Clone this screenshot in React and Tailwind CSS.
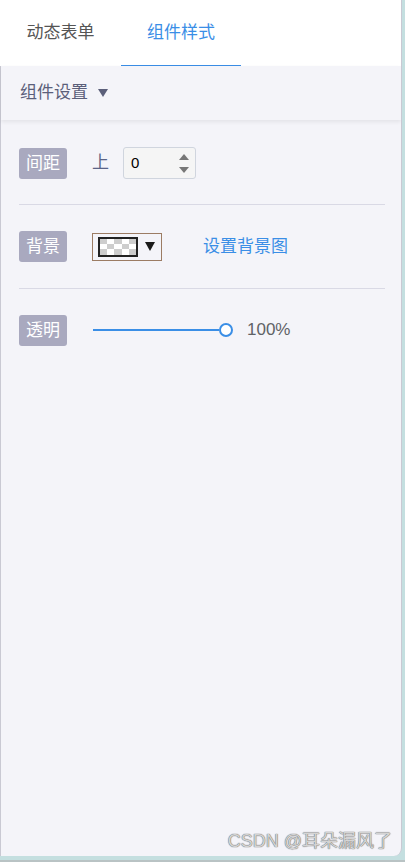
import React from 'react'

const font = { fontFamily: '"Liberation Sans", "Noto Sans CJK SC", sans-serif' }

function Badge({ children }) {
  return (
    <div className="flex h-[31px] w-[48px] items-center justify-center rounded-[3px] bg-[#a9a9bf] text-[17px] leading-none text-white">
      {children}
    </div>
  )
}

function Checker() {
  const cells = []
  for (let r = 0; r < 3; r++) {
    for (let c = 0; c < 5; c++) {
      cells.push(
        <div key={r + '-' + c} className={(r + c) % 2 === 0 ? 'bg-[#cdcdcd]' : 'bg-white'} />
      )
    }
  }
  return (
    <div className="grid h-[20px] w-[40px] grid-cols-5 grid-rows-3 overflow-hidden border-2 border-[#222]">
      {cells}
    </div>
  )
}

export default function App() {
  return (
    <div className="relative flex h-[862px] w-[405px] flex-col bg-[#c4dfe0]" style={font}>
      <div className="flex h-[856px] w-[402px] flex-col overflow-hidden rounded-br-[8px] border-r border-[#c9c9d3] bg-[#f4f4f9]">
        <div className="flex h-[66px] shrink-0 bg-white">
          <div className="flex w-[121px] items-center justify-center text-[17px] text-[#555]">动态表单</div>
          <div className="flex w-[120px] items-center justify-center border-b border-[#3a8ee6] text-[17px] text-[#3a8ee6]">
            组件样式
          </div>
        </div>
        <div className="flex flex-1 flex-col border-l border-[#c9c9d3]">
          <div className="flex h-[54px] shrink-0 items-center gap-[10px] pl-[19px] text-[17px] text-[#5b5f7a] shadow-[0_2px_4px_rgba(0,0,0,0.07)]">
            <span>组件设置</span>
            <svg width="10" height="8" viewBox="0 0 10 8">
              <path d="M0 0 L10 0 L5 8 Z" fill="#5b5f7a" />
            </svg>
          </div>
          <div className="flex flex-col pl-[18px] pr-[16px] pt-[27px]">
            <div className="flex h-[32px] items-center">
              <Badge>间距</Badge>
              <span className="ml-[25px] text-[17px] text-[#5b6488]">上</span>
              <div className="ml-[14px] flex h-[32px] w-[73px] items-center justify-between rounded-[3px] border border-[#d0d5de] bg-[#f5f5f5] pl-[7px] pr-[6px]">
                <span className="text-[15px] text-black">0</span>
                <div className="flex flex-col gap-[7px]">
                  <svg width="10" height="6" viewBox="0 0 10 6"><path d="M0 6 L5 0 L10 6 Z" fill="#777" /></svg>
                  <svg width="10" height="6" viewBox="0 0 10 6"><path d="M0 0 L10 0 L5 6 Z" fill="#777" /></svg>
                </div>
              </div>
            </div>
            <div className="mt-[25px] h-px bg-[#d9d9e5]" />
            <div className="mt-[25px] flex h-[33px] items-center">
              <Badge>背景</Badge>
              <div className="ml-[25px] flex h-[28px] w-[70px] items-center gap-[7px] border border-[#9c7c64] pl-[5px]">
                <Checker />
                <svg width="10" height="9" viewBox="0 0 10 9"><path d="M0 0 L10 0 L5 9 Z" fill="#1a1a1a" /></svg>
              </div>
              <span className="ml-[41px] text-[17px] text-[#3a8ee6]">设置背景图</span>
            </div>
            <div className="mt-[25px] h-px bg-[#d9d9e5]" />
            <div className="mt-[25px] flex h-[32px] items-center">
              <Badge>透明</Badge>
              <div className="ml-[26px] flex w-[140px] items-center">
                <div className="h-[2px] flex-1 bg-[#3a8ee6]" />
                <div className="h-[14px] w-[14px] rounded-full border-2 border-[#3a8ee6] bg-white" />
              </div>
              <span className="ml-[14px] text-[17px] text-[#606266]">100%</span>
            </div>
          </div>
        </div>
      </div>
      <div className="absolute bottom-[7px] right-[13px] text-[18px] text-[#d4d4d4] [text-shadow:0_0_1px_#6a6a6a,0_0_1px_#6a6a6a]">
        CSDN @耳朵漏风了
      </div>
      <div className="mt-auto h-[2px] bg-[#b9c3c4]" />
    </div>
  )
}
